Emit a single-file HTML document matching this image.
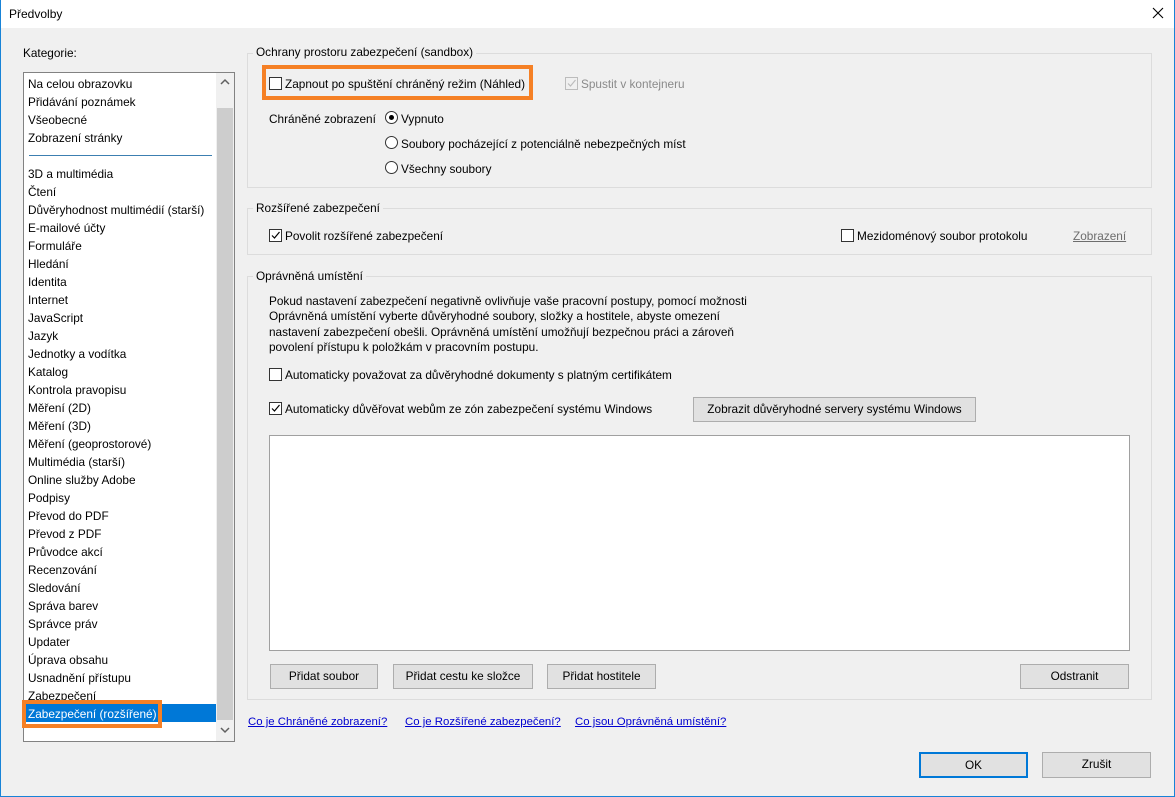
<!DOCTYPE html>
<html><head><meta charset="utf-8"><style>
*{margin:0;padding:0;box-sizing:border-box}
body{width:1175px;height:797px;background:#f0f0f0;font-family:"Liberation Sans","DejaVu Sans",sans-serif;font-size:11.8px;color:#000;position:relative;overflow:hidden}
.a{position:absolute;white-space:nowrap}
.t{line-height:14px}
.grp{position:absolute;border:1px solid #dcdcdc}
.lg{position:absolute;background:#f0f0f0;padding:0 3px;line-height:14px}
.cb{position:absolute;width:13px;height:13px;border:1px solid #333;background:#fff}
.rb{position:absolute;width:13px;height:13px;border:1px solid #333;border-radius:50%;background:#fff}
.btn{position:absolute;background:#e1e1e1;border:1px solid #adadad;text-align:center;line-height:23px}
.lnk{color:#0000d0;text-decoration:underline;font-size:11.4px}
</style></head><body>
<div class="a" style="left:0;top:0;width:1175px;height:28px;background:#fff"></div>
<div class="a t" style="left:9px;top:7px;font-size:12px">Předvolby</div>
<svg class="a" style="left:1152px;top:7px" width="12" height="12"><path d="M1 1L11 11M11 1L1 11" stroke="#000" stroke-width="1.1"/></svg>
<div class="a" style="left:0;top:0;width:1px;height:797px;background:#1883d7"></div>
<div class="a" style="left:1174px;top:0;width:1px;height:797px;background:#1883d7"></div>
<div class="a" style="left:0;top:796px;width:1175px;height:1px;background:#1883d7"></div>

<div class="a t" style="left:23px;top:46px">Kategorie:</div>
<div class="a" style="left:23px;top:72px;width:212px;height:670px;background:#fff;border:1px solid #828282"></div>
<div class="a" style="left:216px;top:73px;width:18px;height:668px;background:#f0f0f0"></div>
<div class="a" style="left:217px;top:108px;width:16px;height:612px;background:#cdcdcd"></div>
<svg class="a" style="left:220px;top:78px" width="10" height="8"><path d="M1 6L5 2L9 6" stroke="#606060" stroke-width="1.5" fill="none"/></svg>
<svg class="a" style="left:220px;top:726px" width="10" height="8"><path d="M1 2L5 6L9 2" stroke="#606060" stroke-width="1.5" fill="none"/></svg>
<div class="a" style="left:29px;top:155px;width:183px;height:1px;background:#3c7fb1"></div>
<div class="a" style="left:24px;top:704px;width:192px;height:18px;background:#0078d7"></div>
<div class="a" style="left:28px;top:75px;line-height:18px">
Na celou obrazovku<br>Přidávání poznámek<br>Všeobecné<br>Zobrazení stránky<br><br>3D a multimédia<br>Čtení<br>Důvěryhodnost multimédií (starší)<br>E-mailové účty<br>Formuláře<br>Hledání<br>Identita<br>Internet<br>JavaScript<br>Jazyk<br>Jednotky a vodítka<br>Katalog<br>Kontrola pravopisu<br>Měření (2D)<br>Měření (3D)<br>Měření (geoprostorové)<br>Multimédia (starší)<br>Online služby Adobe<br>Podpisy<br>Převod do PDF<br>Převod z PDF<br>Průvodce akcí<br>Recenzování<br>Sledování<br>Správa barev<br>Správce práv<br>Updater<br>Úprava obsahu<br>Usnadnění přístupu<br>Zabezpečení<br><span style="color:#fff">Zabezpečení (rozšířené)</span></div>
<div class="a" style="left:22px;top:700px;width:140px;height:28px;border:4px solid #f58025"></div>

<div class="grp" style="left:247px;top:53px;width:905px;height:135px"></div>
<div class="lg" style="left:253px;top:45px">Ochrany prostoru zabezpečení (sandbox)</div>
<div class="cb" style="left:269px;top:77px"></div>
<div class="a t" style="left:285px;top:77px">Zapnout po spuštění chráněný režim (Náhled)</div>
<div class="a" style="left:262px;top:65px;width:271px;height:35px;border:4px solid #f58025"></div>
<div class="cb" style="left:565px;top:77px;border-color:#bcbcbc;background:#f0f0f0"></div>
<svg class="a" style="left:566px;top:78px" width="11" height="11"><path d="M2 5.5L4.5 8L9.5 2" stroke="#bcbcbc" stroke-width="1.2" fill="none"/></svg>
<div class="a t" style="left:581px;top:77px;color:#8a8a8a">Spustit v kontejneru</div>
<div class="a t" style="left:269px;top:112px">Chráněné zobrazení</div>
<div class="rb" style="left:385px;top:111px"></div><div class="a" style="left:389px;top:115px;width:5px;height:5px;border-radius:50%;background:#000"></div>
<div class="a t" style="left:401px;top:112px">Vypnuto</div>
<div class="rb" style="left:385px;top:136px"></div>
<div class="a t" style="left:401px;top:137px">Soubory pocházející z potenciálně nebezpečných míst</div>
<div class="rb" style="left:385px;top:161px"></div>
<div class="a t" style="left:401px;top:162px">Všechny soubory</div>

<div class="grp" style="left:247px;top:208px;width:905px;height:47px"></div>
<div class="lg" style="left:253px;top:201px">Rozšířené zabezpečení</div>
<div class="cb" style="left:269px;top:229px"></div>
<svg class="a" style="left:270px;top:230px" width="11" height="11"><path d="M2 5.5L4.5 8L9.5 2" stroke="#000" stroke-width="1.2" fill="none"/></svg>
<div class="a t" style="left:285px;top:229px">Povolit rozšířené zabezpečení</div>
<div class="cb" style="left:841px;top:229px"></div>
<div class="a t" style="left:857px;top:229px">Mezidoménový soubor protokolu</div>
<div class="a t" style="left:1073px;top:229px;color:#6d6d6d;text-decoration:underline">Zobrazení</div>

<div class="grp" style="left:247px;top:276px;width:905px;height:424px"></div>
<div class="lg" style="left:253px;top:269px">Oprávněná umístění</div>
<div class="a" style="left:269px;top:294px;line-height:15.3px">Pokud nastavení zabezpečení negativně ovlivňuje vaše pracovní postupy, pomocí možnosti<br>Oprávněná umístění vyberte důvěryhodné soubory, složky a hostitele, abyste omezení<br>nastavení zabezpečení obešli. Oprávněná umístění umožňují bezpečnou práci a zároveň<br>povolení přístupu k položkám v pracovním postupu.</div>
<div class="cb" style="left:269px;top:368px"></div>
<div class="a t" style="left:285px;top:368px">Automaticky považovat za důvěryhodné dokumenty s platným certifikátem</div>
<div class="cb" style="left:269px;top:402px"></div>
<svg class="a" style="left:270px;top:403px" width="11" height="11"><path d="M2 5.5L4.5 8L9.5 2" stroke="#000" stroke-width="1.2" fill="none"/></svg>
<div class="a t" style="left:285px;top:402px">Automaticky důvěřovat webům ze zón zabezpečení systému Windows</div>
<div class="btn" style="left:693px;top:397px;width:283px;height:25px">Zobrazit důvěryhodné servery systému Windows</div>
<div class="a" style="left:269px;top:435px;width:861px;height:216px;background:#fff;border:1px solid #a0a0a0"></div>
<div class="btn" style="left:270px;top:664px;width:108px;height:25px">Přidat soubor</div>
<div class="btn" style="left:393px;top:664px;width:140px;height:25px">Přidat cestu ke složce</div>
<div class="btn" style="left:547px;top:664px;width:109px;height:25px">Přidat hostitele</div>
<div class="btn" style="left:1020px;top:664px;width:109px;height:25px">Odstranit</div>

<div class="a t lnk" style="left:248px;top:715px">Co je Chráněné zobrazení?</div>
<div class="a t lnk" style="left:405px;top:715px">Co je Rozšířené zabezpečení?</div>
<div class="a t lnk" style="left:575px;top:715px">Co jsou Oprávněná umístění?</div>

<div class="btn" style="left:919px;top:752px;width:109px;height:26px;border:2px solid #0078d7;line-height:22px">OK</div>
<div class="btn" style="left:1042px;top:752px;width:109px;height:26px">Zrušit</div>
</body></html>
